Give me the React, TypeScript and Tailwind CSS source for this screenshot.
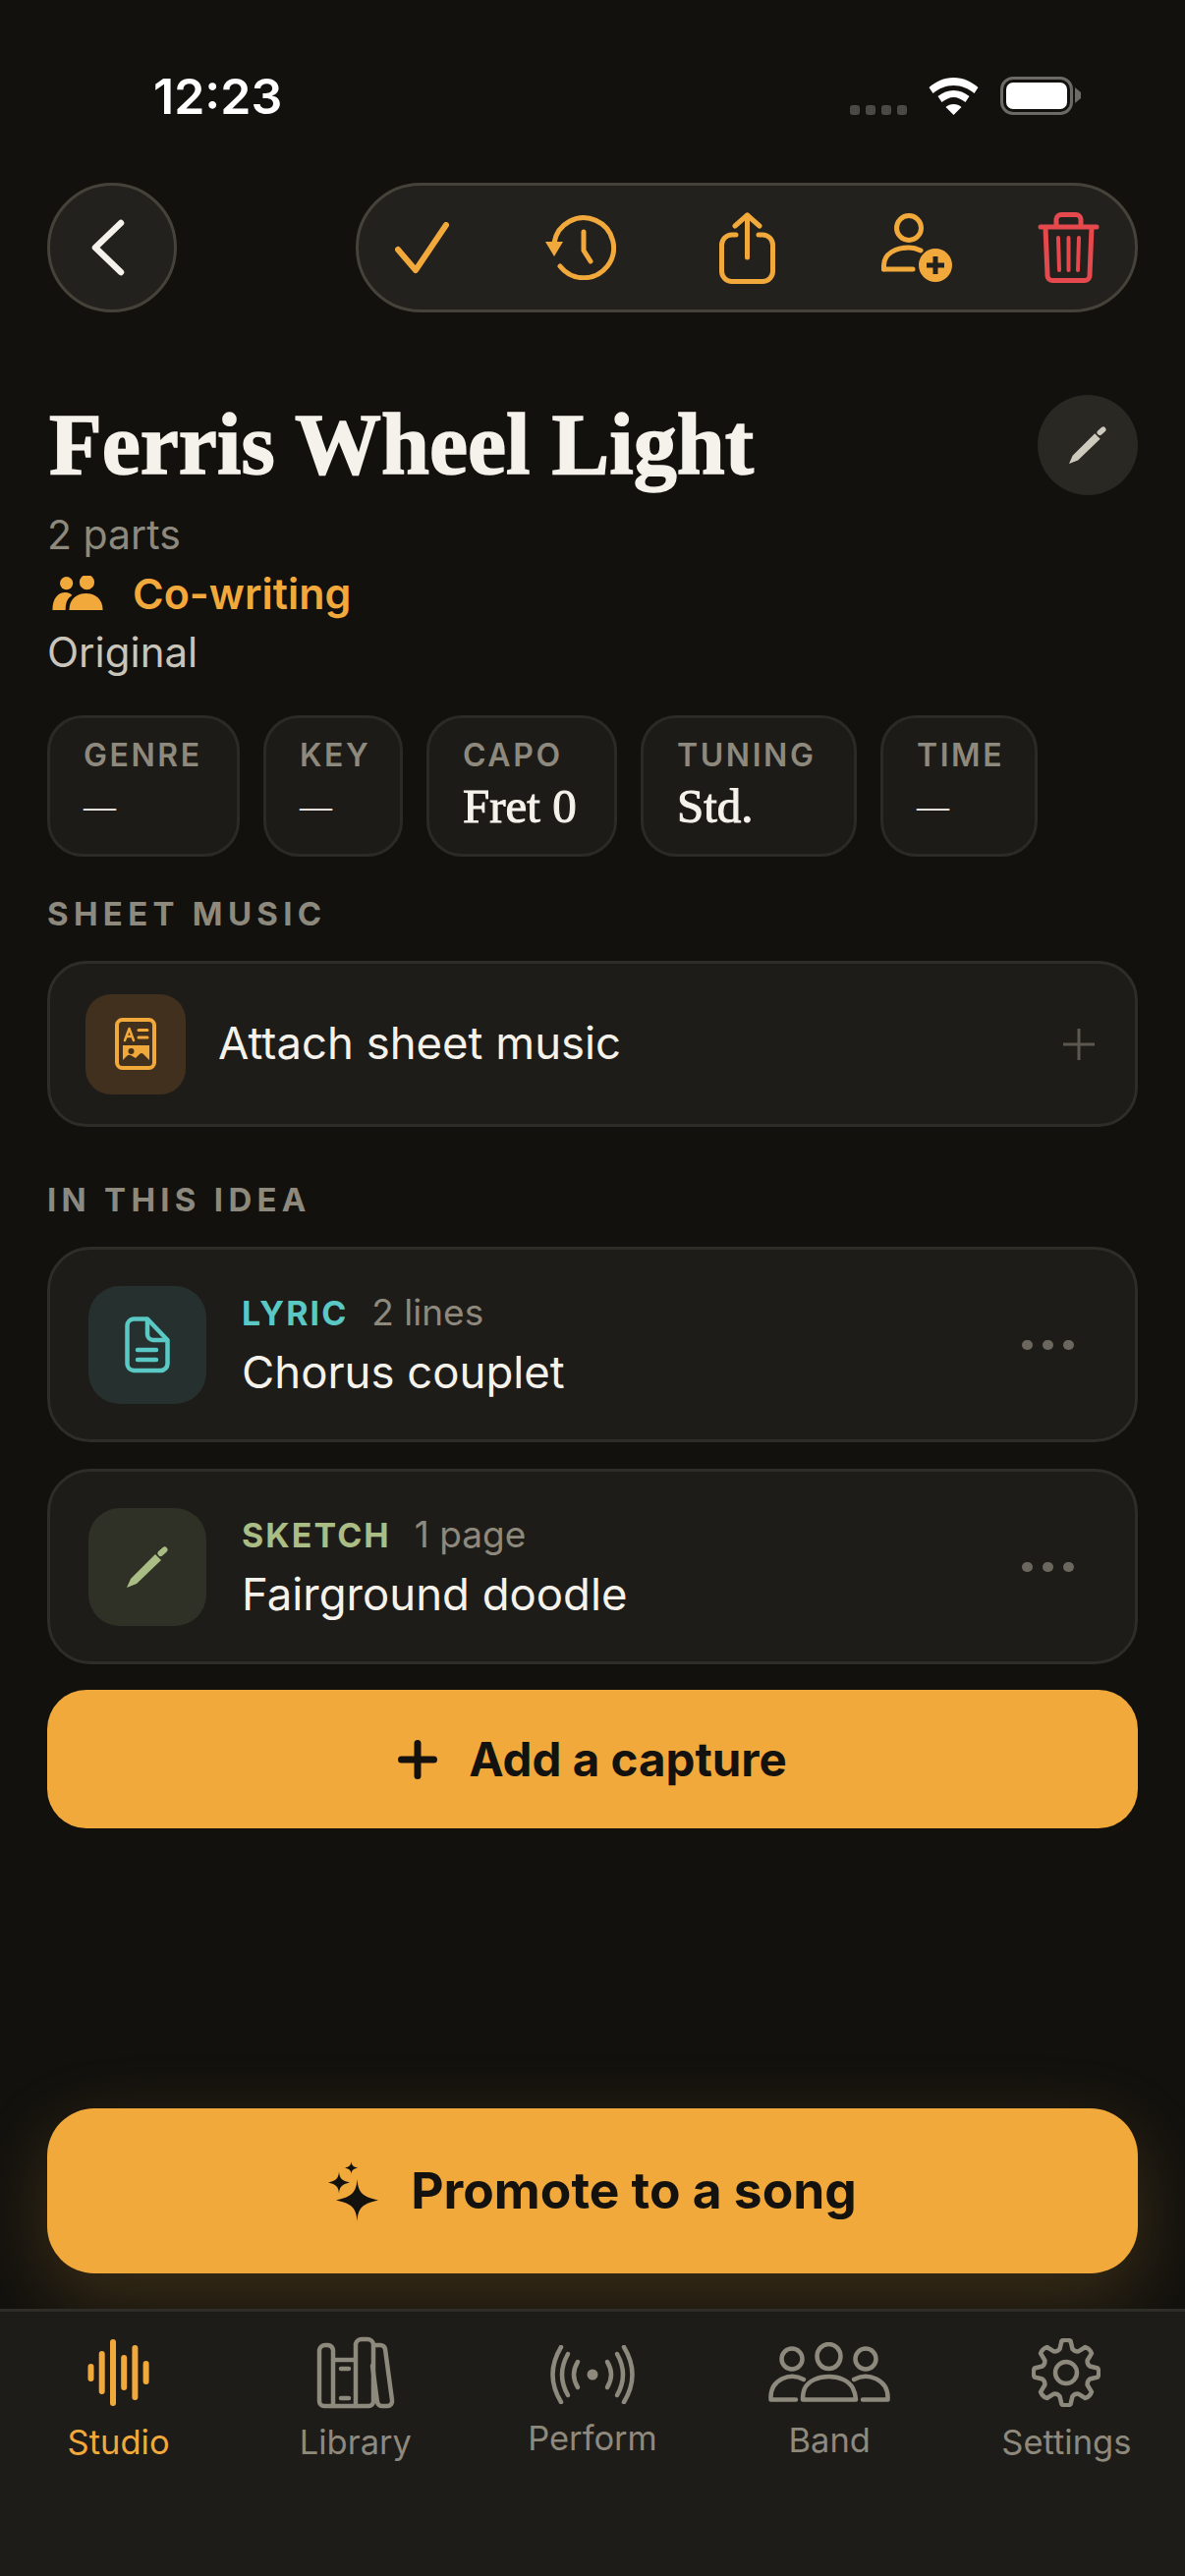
import React from 'react';

const sans = 'font-["Inter",sans-serif]';

function Check() {
  return (
    <svg width="55" height="53" viewBox="0 0 55 53" fill="none" stroke="#f2a93b" strokeWidth="6" strokeLinecap="round" strokeLinejoin="round">
      <path d="M3 28 L21 49 L52 3" />
    </svg>
  );
}

function History() {
  return (
    <svg width="72" height="66" viewBox="0 0 72 66" fill="none" stroke="#f2a93b" strokeWidth="5" strokeLinecap="round" strokeLinejoin="round">
      <path d="M9 28 A30.500 30.500 0 1 1 15 52" />
      <path d="M0 27 L18 27 L9 42 Z" fill="#f2a93b" stroke="none" />
      <path d="M39 17 V36 L46 47" />
    </svg>
  );
}

function Share() {
  return (
    <svg width="57" height="73" viewBox="0 0 57 73" fill="none" stroke="#f2a93b" strokeWidth="5" strokeLinecap="round" strokeLinejoin="round">
      <path d="M17 23 H13 A10.500 10.500 0 0 0 2.500 33.500 V60 A10.500 10.500 0 0 0 13 70.500 H44 A10.500 10.500 0 0 0 54.500 60 V33.500 A10.500 10.500 0 0 0 44 23 H40" />
      <path d="M28.500 46 V3" />
      <path d="M16 14 L28.500 3 L41 14" />
    </svg>
  );
}

function AddUser() {
  return (
    <svg width="72" height="70" viewBox="0 0 72 70" fill="none" stroke="#f2a93b" strokeWidth="5" strokeLinecap="round" strokeLinejoin="round">
      <circle cx="28" cy="15" r="12.500" />
      <path d="M2.500 57 V53 C2.500 41 15 35 28 35 C32 35 36 36 40 38" />
      <path d="M2.500 57 H32" />
      <circle cx="55" cy="53" r="17" fill="#f2a93b" stroke="none" />
      <path d="M55 44 V62 M46 53 H64" stroke="#23211d" strokeLinecap="butt" />
    </svg>
  );
}

function Trash() {
  return (
    <svg width="63" height="72" viewBox="0 0 63 72" fill="none" stroke="#e5484d" strokeWidth="5" strokeLinecap="round" strokeLinejoin="round">
      <path d="M3 15 H60" />
      <path d="M19 14 V7 A5 5 0 0 1 24 2.500 H39 A5 5 0 0 1 44 7 V14" />
      <path d="M8 16 L10 64 A5 5 0 0 0 15 69.500 H48 A5 5 0 0 0 53 64 L55 16" />
      <path d="M21 26 L22 59 M31.500 26 V59 M42 26 L41 59" strokeWidth="4" />
    </svg>
  );
}

function Pencil({ color, size }: { color: string; size: number }) {
  return (
    <svg width={size} height={size} viewBox="0 0 42 42" fill="none">
      <path d="M0 42 L4 33 L29 8 L35 14 L10 38 Z" fill={color} />
      <path d="M34.500 7 L38.500 3.500" stroke={color} strokeWidth="6" strokeLinecap="round" />
    </svg>
  );
}

function Sparkles() {
  return (
    <svg width="52" height="61" viewBox="0 0 52 61" fill="#14120f">
      <path d="M29.500 18 C30.500 31 34 36 51 39.500 C34 43 30.500 48 29.500 61 C28.500 48 25 43 8 39.500 C25 36 28.500 31 29.500 18 Z" />
      <path d="M11 10.500 C11.500 17 14 20 22 21.500 C14 23 11.500 26 11 32.500 C10.500 26 8 23 0 21.500 C8 20 10.500 17 11 10.500 Z" />
      <path d="M23.500 0 C23.800 4 25.500 5.500 30 6.500 C25.500 7.500 23.800 9 23.500 13 C23.200 9 21.500 7.500 17 6.500 C21.500 5.500 23.200 4 23.500 0 Z" />
    </svg>
  );
}

function SheetIcon() {
  return (
    <svg width="42" height="53" viewBox="0 0 42 53" fill="none" strokeLinecap="round">
      <rect x="2" y="2" width="38" height="49" rx="5.500" stroke="#f2a93b" strokeWidth="4" />
      <path d="M10 23 L14.500 11 L19 23 M11.500 19 H17.500" stroke="#f2a93b" strokeWidth="2.500" strokeLinejoin="round" />
      <path d="M24 12.500 H33 M24 20 H33" stroke="#f2a93b" strokeWidth="3" />
      <path d="M8 28 H35 V43 L29 37 Q27 35 25 37 L21 41 L16 38 Q14 37 12 39 L8 43 Z" fill="#f2a93b" />
      <circle cx="16.500" cy="34" r="3" fill="#40301d" />
    </svg>
  );
}

function DocIcon() {
  return (
    <svg width="46" height="58" viewBox="0 0 46 58" fill="none" stroke="#5ac8c4" strokeWidth="4.500" strokeLinecap="round" strokeLinejoin="round">
      <path d="M9 2.500 H23 L43.500 24 V48 A7 7 0 0 1 36.500 55 H9 A7 7 0 0 1 2.500 48 V9 A7 7 0 0 1 9 2.500 Z" />
      <path d="M23 3 V18 A6 6 0 0 0 29 24 H43" />
      <path d="M13 34 H32 M13 44 H32" />
    </svg>
  );
}

function AudioWave() {
  const bars = [
    [3.5, 29, 41],
    [14.7, 16, 54],
    [26, 4, 66],
    [37.2, 20, 50],
    [48.4, 10, 60],
    [59.6, 26, 44],
  ];
  return (
    <svg width="64" height="70" viewBox="0 0 64 70" fill="none" stroke="#f2a93b" strokeWidth="6" strokeLinecap="round">
      {bars.map(([x, y1, y2]) => (
        <path key={x} d={`M${x} ${y1} V${y2}`} />
      ))}
    </svg>
  );
}

function Books() {
  return (
    <svg width="80" height="74" viewBox="0 0 80 74" fill="none" stroke="#8e897d" strokeWidth="4.500" strokeLinecap="round" strokeLinejoin="round">
      <path d="M3 14 A6 6 0 0 1 9 9 H12 A6 6 0 0 1 17 14 V71 H8 A5 5 0 0 1 3 66 Z" />
      <path d="M17 24 H40" />
      <path d="M40 8 A6 6 0 0 1 46 3 H52 A6 6 0 0 1 58 8 V66 A5 5 0 0 1 53 71 H17" />
      <path d="M40 8 V71" />
      <path d="M25 33 H33 M25 63 H33" />
      <path d="M60 9 H65 A5 5 0 0 1 70 13 L77 65 A5 5 0 0 1 72 71 H67 A5 5 0 0 1 62 67 L57 30" />
    </svg>
  );
}

function Broadcast() {
  return (
    <svg width="86" height="60" viewBox="0 0 86 60" fill="none" stroke="#8e897d" strokeWidth="4.500" strokeLinecap="round">
      <circle cx="43" cy="30" r="5.500" fill="#8e897d" stroke="none" />
      <path d="M28 17 Q20 30 28 43 M58 17 Q66 30 58 43" />
      <path d="M18 9 Q6 30 18 51 M68 9 Q80 30 68 51" />
      <path d="M11 2 Q-6 30 11 58 M75 2 Q92 30 75 58" />
    </svg>
  );
}

function People() {
  return (
    <svg width="124" height="62" viewBox="0 0 124 62" fill="none" stroke="#8e897d" strokeWidth="4.500" strokeLinecap="round" strokeLinejoin="round">
      <ellipse cx="24" cy="17" rx="10.500" ry="10.500" />
      <ellipse cx="61.500" cy="14.500" rx="12" ry="12.500" />
      <ellipse cx="99" cy="17" rx="10.500" ry="10.500" />
      <path d="M36 38 C22 30 2.500 38 2.500 56 V58.500 H28" />
      <path d="M87 38 C101 30 121.500 38 121.500 56 V58.500 H96" />
      <path d="M35 58.500 H89 C89 54 88 51 86 47 C78 31 45 31 37 47 C35 51 35 54 35 58.500 Z" />
    </svg>
  );
}

// eight-tooth cog, points worked out around the centre
function gearPath() {
  const c = 35;
  const at = (deg: number, r: number) => {
    const a = (deg * Math.PI) / 180;
    return `${(c + r * Math.cos(a)).toFixed(2)} ${(c + r * Math.sin(a)).toFixed(2)}`;
  };
  let d = '';
  for (let i = 0; i < 8; i++) {
    const a = i * 45 - 90;
    d += `${i === 0 ? 'M' : 'L'}${at(a - 15, 25)} L${at(a - 8, 32.5)} Q${at(a, 34.5)} ${at(a + 8, 32.5)} L${at(a + 15, 25)} Q${at(a + 22.5, 23)} `;
    d += at(a + 30, 25) + ' ';
  }
  return d + 'Z';
}

function Gear() {
  return (
    <svg width="70" height="70" viewBox="0 0 70 70" fill="none" stroke="#8e897d" strokeWidth="4.500" strokeLinecap="round" strokeLinejoin="round">
      <path d={gearPath()} />
      <circle cx="35" cy="35" r="11" />
    </svg>
  );
}

function Chip({ label, value, className }: { label: string; value: string; className: string }) {
  const isEmpty = value === '—';
  return (
    <div className={`h-[144px] shrink-0 rounded-[36px] border-[3px] border-[#2c2a26] bg-[#1d1b17] pt-[18px] pl-[34px] ${className}`}>
      <div className="text-[32px] leading-[40px] font-semibold tracking-[0.08em] text-[#8e897d]">{label}</div>
      <div className={`mt-[6px] font-["Liberation_Serif",serif] leading-[52px] font-normal text-[#f5f2eb] ${isEmpty ? 'text-[33px]' : 'text-[49px] [-webkit-text-stroke:1px_#f5f2eb]'}`}>{value}</div>
    </div>
  );
}

function Dots() {
  return (
    <div className="flex gap-[10px]">
      <span className="h-[10px] w-[11px] rounded-full bg-[#6b675e]" />
      <span className="h-[10px] w-[11px] rounded-full bg-[#6b675e]" />
      <span className="h-[10px] w-[11px] rounded-full bg-[#6b675e]" />
    </div>
  );
}

function PartCard({ kind, kindColor, meta, title, iconBg, icon }: { kind: string; kindColor: string; meta: string; title: string; iconBg: string; icon: React.ReactNode }) {
  return (
    <div className="flex h-[199px] items-center rounded-[44px] border-[3px] border-[#2f2d28] bg-[#1e1c18] pr-[62px] pl-[39px]">
      <div className={`flex h-[120px] w-[120px] items-center justify-center rounded-[32px] ${iconBg}`}>{icon}</div>
      <div className="ml-[36px] flex-1 pt-[3px]">
        <div className="flex items-baseline gap-[24px]">
          <span className={`text-[34px] leading-[44px] font-bold tracking-[0.06em] ${kindColor}`}>{kind}</span>
          <span className="text-[37px] leading-[44px] text-[#8e897d]">{meta}</span>
        </div>
        <div className="mt-[8px] text-[45.5px] leading-[60px] text-[#f5f2eb]">{title}</div>
      </div>
      <Dots />
    </div>
  );
}

const tabs = [
  { label: 'Studio', icon: <AudioWave />, pad: 'pt-[27px]', h: 'h-[70px]', gap: 'mt-[16px]', color: 'text-[#f2a93b]' },
  { label: 'Library', icon: <Books />, pad: 'pt-[25px]', h: 'h-[74px]', gap: 'mt-[14px]', color: 'text-[#8e897d]' },
  { label: 'Perform', icon: <Broadcast />, pad: 'pt-[34px]', h: 'h-[60px]', gap: 'mt-[15px]', color: 'text-[#8e897d]' },
  { label: 'Band', icon: <People />, pad: 'pt-[31px]', h: 'h-[62px]', gap: 'mt-[18px]', color: 'text-[#8e897d]' },
  { label: 'Settings', icon: <Gear />, pad: 'pt-[27px]', h: 'h-[70px]', gap: 'mt-[16px]', color: 'text-[#8e897d]' },
];

export default function App() {
  return (
    <div className={`flex h-[2622px] w-[1206px] flex-col overflow-hidden bg-[#12110e] ${sans}`}>
      {/* status bar */}
      <div className="flex h-[186px] shrink-0 items-start justify-between pt-[70px] pr-[114px] pl-[156px]">
        <div className="text-[50px] leading-[56px] font-semibold text-white">12:23</div>
        <div className="mt-[8px] flex items-center">
          <div className="mt-[28px] mr-[22px] flex gap-[6px]">
            <span className="h-[10px] w-[10px] rounded-[3px] bg-[#4a4946]" />
            <span className="h-[10px] w-[10px] rounded-[3px] bg-[#4a4946]" />
            <span className="h-[10px] w-[10px] rounded-[3px] bg-[#4a4946]" />
            <span className="h-[10px] w-[10px] rounded-[3px] bg-[#4a4946]" />
          </div>
          <svg width="51" height="38" viewBox="0 0 50 38" fill="white">
            <path d="M25 0 C35 0 43 4 50 10 L46 16 C40 11 33 8 25 8 C17 8 10 11 4 16 L0 10 C7 4 15 0 25 0 Z" />
            <path d="M25 13 C31 13 36 15 41 19 L37 25 C33 22 29 20 25 20 C21 20 17 22 13 25 L9 19 C14 15 19 13 25 13 Z" />
            <path d="M25 27 C28 27 31 28 33 30 L25 38 L17 30 C19 28 22 27 25 27 Z" />
          </svg>
          <div className="relative ml-[22px] h-[39px] w-[74px] rounded-[13px] border-[3px] border-[#6b6a66] p-[3px]">
            <div className="h-full w-full rounded-[7px] bg-white" />
            <svg className="absolute top-[8px] -right-[11px]" width="6" height="16" viewBox="0 0 6 16" fill="#6b6a66">
              <path d="M0 0 L6 5 V11 L0 16 Z" />
            </svg>
          </div>
        </div>
      </div>

      <div className="flex-1 px-[48px]">
        {/* toolbar */}
        <div className="flex items-center justify-between">
          <button className="flex h-[132px] w-[132px] items-center justify-center rounded-full border-[3px] border-[#45423a] bg-[#23211d]">
            <svg className="mr-[9px]" width="36" height="60" viewBox="0 0 36 60" fill="none" stroke="#f5f2eb" strokeWidth="6.500" strokeLinecap="round" strokeLinejoin="round">
              <path d="M31 5 L5 30 L31 55" />
            </svg>
          </button>
          <div className="flex h-[132px] w-[796px] items-center rounded-full border-[3px] border-[#45423a] bg-[#23211d] pl-[37px]">
            <Check />
            <div className="ml-[98px]"><History /></div>
            <div className="ml-[105px]"><Share /></div>
            <div className="ml-[108px]"><AddUser /></div>
            <div className="ml-[87px]"><Trash /></div>
          </div>
        </div>

        {/* title block */}
        <div className="mt-[84px] flex items-start justify-between">
          <h1 className='pl-[2px] font-["Liberation_Serif",serif] text-[88px] leading-[102px] font-bold text-[#f5f2eb] [-webkit-text-stroke:1.5px_#f5f2eb]'>Ferris Wheel Light</h1>
          <button className="flex h-[102px] w-[102px] items-center justify-center rounded-full bg-[#2a2823]">
            <Pencil color="#cfcabe" size={38} />
          </button>
        </div>
        <div className="mt-[10px] text-[41px] leading-[60px] text-[#8e897d]">2 parts</div>
        <div className="flex h-[60px] items-center">
          <svg className="ml-[4px]" width="54" height="36" viewBox="0 0 54 38" fill="#f2a93b">
            <circle cx="15" cy="8" r="7" />
            <circle cx="37" cy="7" r="8" />
            <path d="M0 37 C0 24 6 18 14 18 C17 18 19 19 21 21 C16 24 14 29 14 37 Z" />
            <path d="M18 37 C18 25 26 19 36 19 C46 19 54 25 54 37 Z" />
          </svg>
          <span className="ml-[29px] text-[43px] font-semibold text-[#f2a93b]">Co-writing</span>
        </div>
        <div className="text-[42px] leading-[60px] text-[#c9c5bb]">Original</div>

        {/* metadata chips */}
        <div className="mt-[34px] flex gap-[24px]">
          <Chip label="GENRE" value="—" className="w-[196px]" />
          <Chip label="KEY" value="—" className="w-[142px]" />
          <Chip label="CAPO" value="Fret 0" className="w-[194px]" />
          <Chip label="TUNING" value="Std." className="w-[220px]" />
          <Chip label="TIME" value="—" className="w-[160px]" />
        </div>

        <div className="mt-[38px] text-[33px] leading-[40px] font-bold tracking-[0.16em] text-[#8e897d]">SHEET MUSIC</div>
        <div className="mt-[28px] flex h-[169px] items-center rounded-[40px] border-[3px] border-[#2f2d28] bg-[#1e1c18] pr-[41px] pl-[36px]">
          <div className="flex h-[102px] w-[102px] items-center justify-center rounded-[26px] bg-[#40301d]">
            <SheetIcon />
          </div>
          <div className="ml-[33px] flex-1 text-[45.5px] text-[#f5f2eb]">Attach sheet music</div>
          <svg width="32" height="32" viewBox="0 0 32 32" stroke="#5c584f" strokeWidth="3">
            <path d="M16 0 V32 M0 16 H32" />
          </svg>
        </div>

        <div className="mt-[54px] text-[33px] leading-[40px] font-bold tracking-[0.16em] text-[#8e897d]">IN THIS IDEA</div>
        <div className="mt-[28px] flex flex-col gap-[27px]">
          <PartCard kind="LYRIC" kindColor="text-[#5ac8c4]" meta="2 lines" title="Chorus couplet" iconBg="bg-[#26302e]" icon={<DocIcon />} />
          <PartCard kind="SKETCH" kindColor="text-[#a9bd85]" meta="1 page" title="Fairground doodle" iconBg="bg-[#2f3026]" icon={<Pencil color="#a9bd85" size={42} />} />
        </div>

        <button className="mt-[26px] flex h-[141px] w-full items-center justify-center gap-[32px] rounded-[40px] bg-[#f2a93b]">
          <svg width="40" height="40" viewBox="0 0 40 40" stroke="#14120f" strokeWidth="7" strokeLinecap="round">
            <path d="M20 3.500 V36.500 M3.500 20 H36.500" />
          </svg>
          <span className="text-[47.5px] font-bold text-[#14120f]">Add a capture</span>
        </button>

        <button className="mt-[285px] flex h-[168px] w-full items-center justify-center gap-[32px] rounded-[48px] bg-[#f2a93b] shadow-[0_24px_80px_rgba(242,169,59,0.2)]">
          <Sparkles />
          <span className="text-[51.5px] font-bold text-[#14120f]">Promote to a song</span>
        </button>
      </div>

      {/* tab bar */}
      <div className="grid h-[272px] shrink-0 grid-cols-5 border-t-[3px] border-[#2f2d28] bg-[#1e1c18]">
        {tabs.map((t) => (
          <div key={t.label} className={`flex flex-col items-center ${t.pad}`}>
            <div className={`flex items-center justify-center ${t.h}`}>{t.icon}</div>
            <div className={`text-[34.5px] leading-[40px] ${t.gap} ${t.color}`}>{t.label}</div>
          </div>
        ))}
      </div>
    </div>
  );
}
